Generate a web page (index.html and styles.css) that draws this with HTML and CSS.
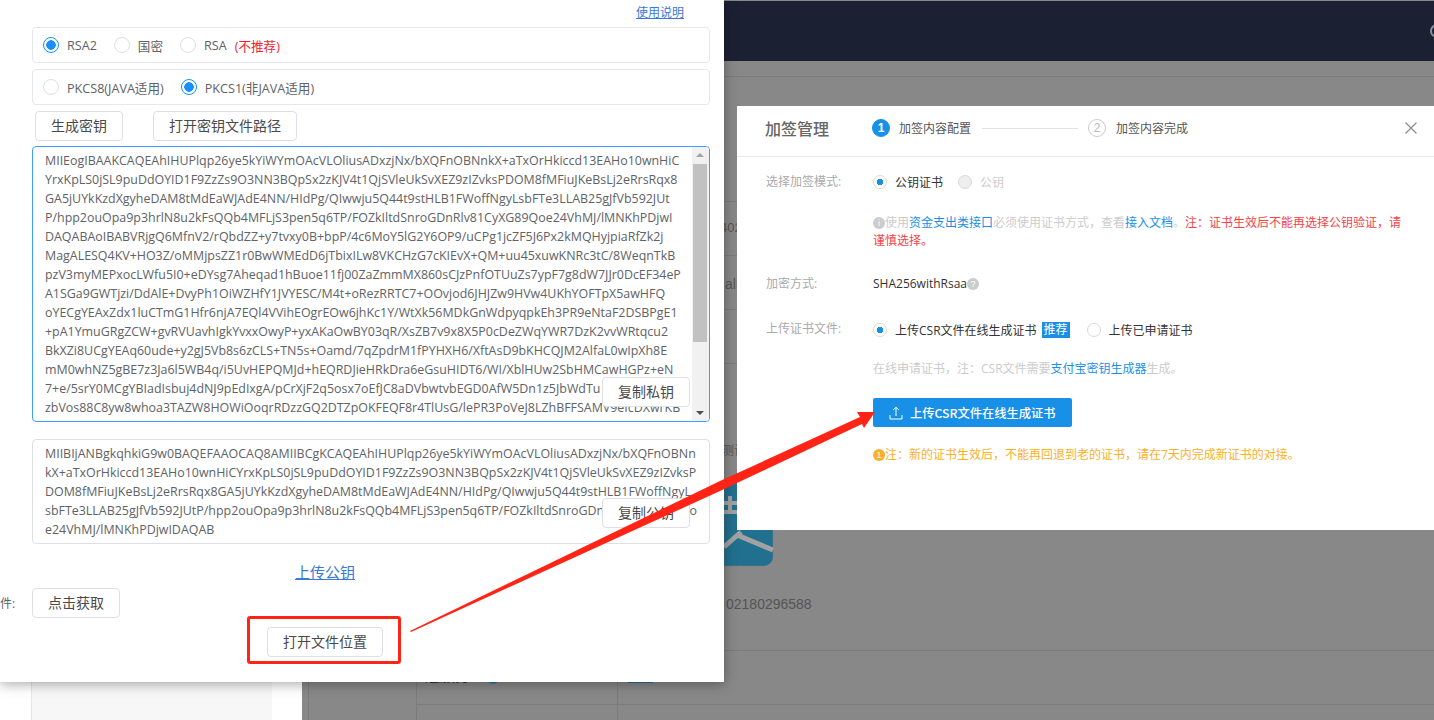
FILE: index.html
```html
<!DOCTYPE html>
<html lang="zh-CN">
<head>
<meta charset="utf-8">
<title>加签管理</title>
<link rel="stylesheet" href="styles.css">
</head>
<body>
<div class="desktop">
  <div class="bg-page">
    <div class="bg-top"></div>
    <div class="hline l76"></div><div class="hline l201"></div><div class="hline l255"></div><div class="hline l309"></div><div class="hline l363"></div><div class="hline l650"></div><div class="hline l704"></div>
    <div class="vline v308"></div><div class="vline v416"></div><div class="vline v617"></div>
    <div class="top-glyph"></div>
    <span class="bg-text t402">402</span>
    <span class="bg-text talip">alip</span>
    <span class="bg-text tce">测试</span>
    <span class="bg-text tnum">02180296588</span>
    <span class="bg-text tsvc">连服务</span>
    <span class="bg-dot"></span>
    <span class="bg-tag"></span>
    <svg class="logo" width="50" height="87" viewBox="0 0 50 87"><path d="M0 3H49V77a9 9 0 0 1-9 9H0Z" fill="#22708f" stroke="#7d7d7d" stroke-width=".5"/><path d="M0 23H13M0 32H13M6 16V32" stroke="#a2a2a2" stroke-width="4" fill="none"/><path d="M0 67L17 52M13 55L49 70" stroke="#a2a2a2" stroke-width="5" fill="none"/></svg>
    <div class="side-left"><div class="side-inner"></div></div>
  </div>

  <section class="panel">
    <div class="help-row"><a class="help-link">使用说明</a></div>
    <div class="opt-box">
      <label class="opt"><i class="rd on"></i>RSA2</label>
      <label class="opt"><i class="rd"></i>国密</label>
      <label class="opt"><i class="rd"></i>RSA<em class="warn">(不推荐)</em></label>
    </div>
    <div class="opt-box">
      <label class="opt"><i class="rd"></i>PKCS8(JAVA适用)</label>
      <label class="opt"><i class="rd on"></i>PKCS1(非JAVA适用)</label>
    </div>
    <div class="btn-row">
      <button class="btn w88">生成密钥</button>
      <button class="btn w144">打开密钥文件路径</button>
    </div>
    <div class="keybox private">
      <div class="lines">
        <div>MIIEogIBAAKCAQEAhIHUPlqp26ye5kYiWYmOAcVLOliusADxzjNx/bXQFnOBNnkX+aTxOrHkiccd13EAHo10wnHiC</div>
        <div>YrxKpLS0jSL9puDdOYID1F9ZzZs9O3NN3BQpSx2zKJV4t1QjSVleUkSvXEZ9zIZvksPDOM8fMFiuJKeBsLj2eRrsRqx8</div>
        <div>GA5jUYkKzdXgyheDAM8tMdEaWJAdE4NN/HIdPg/QIwwju5Q44t9stHLB1FWoffNgyLsbFTe3LLAB25gJfVb592JUt</div>
        <div>P/hpp2ouOpa9p3hrlN8u2kFsQQb4MFLjS3pen5q6TP/FOZkIltdSnroGDnRlv81CyXG89Qoe24VhMJ/lMNKhPDjwI</div>
        <div>DAQABAoIBABVRjgQ6MfnV2/rQbdZZ+y7tvxy0B+bpP/4c6MoY5lG2Y6OP9/uCPg1jcZF5J6Px2kMQHyjpiaRfZk2j</div>
        <div>MagALESQ4KV+HO3Z/oMMjpsZZ1r0BwWMEdD6jTbixILw8VKCHzG7cKIEvX+QM+uu45xuwKNRc3tC/8WeqnTkB</div>
        <div>pzV3myMEPxocLWfu5I0+eDYsg7Aheqad1hBuoe11fj00ZaZmmMX860sCJzPnfOTUuZs7ypF7g8dW7JJr0DcEF34eP</div>
        <div>A1SGa9GWTjzi/DdAlE+DvyPh1OiWZHfY1JVYESC/M4t+oRezRRTC7+OOvjod6JHJZw9HVw4UKhYOFTpX5awHFQ</div>
        <div>oYECgYEAxZdx1luCTmG1Hfr6njA7EQl4VVihEOgrEOw6jhKc1Y/WtXk56MDkGnWdpyqpkEh3PR9eNtaF2DSBPgE1</div>
        <div>+pA1YmuGRgZCW+gvRVUavhIgkYvxxOwyP+yxAKaOwBY03qR/XsZB7v9x8X5P0cDeZWqYWR7DzK2vvWRtqcu2</div>
        <div>BkXZi8UCgYEAq60ude+y2gJ5Vb8s6zCLS+TN5s+Oamd/7qZpdrM1fPYHXH6/XftAsD9bKHCQJM2AlfaL0wIpXh8E</div>
        <div>mM0whNZ5gBE7z3Ja6l5WB4q/i5UvHEPQMJd+hEQRDJieHRkDra6eGsuHIDT6/WI/XblHUw2SbHMCawHGPz+eN</div>
        <div>7+e/5srY0MCgYBIadIsbuj4dNJ9pEdIxgA/pCrXjF2q5osx7oEfJC8aDVbwtvbEGD0AfW5Dn1z5JbWdTu</div>
        <div>zbVos88C8yw8whoa3TAZW8HOWiOoqrRDzzGQ2DTZpOKFEQF8r4TlUsG/lePR3PoVeJ8LZhBFFSAMV9eIcDXwrKB</div>
      </div>
      <div class="scrollbar">
        <span class="arrow-up"></span>
        <span class="thumb"></span>
        <span class="arrow-down"></span>
      </div>
      <button class="btn w88 copy copy-private">复制私钥</button>
    </div>
    <div class="keybox public">
      <div class="lines">
        <div>MIIBIjANBgkqhkiG9w0BAQEFAAOCAQ8AMIIBCgKCAQEAhIHUPlqp26ye5kYiWYmOAcVLOliusADxzjNx/bXQFnOBNn</div>
        <div>kX+aTxOrHkiccd13EAHo10wnHiCYrxKpLS0jSL9puDdOYID1F9ZzZs9O3NN3BQpSx2zKJV4t1QjSVleUkSvXEZ9zIZvksP</div>
        <div>DOM8fMFiuJKeBsLj2eRrsRqx8GA5jUYkKzdXgyheDAM8tMdEaWJAdE4NN/HIdPg/QIwwju5Q44t9stHLB1FWoffNgyL</div>
        <div>sbFTe3LLAB25gJfVb592JUtP/hpp2ouOpa9p3hrlN8u2kFsQQb4MFLjS3pen5q6TP/FOZkIltdSnroGDnRlv81CyXG89Qo</div>
        <div>e24VhMJ/lMNKhPDjwIDAQAB</div>
      </div>
      <button class="btn w88 copy copy-public">复制公钥</button>
    </div>
    <div class="upload-row"><a class="upload-link">上传公钥</a></div>
    <div class="fetch-row">
      <span class="cut-label">件:</span>
      <button class="btn w88">点击获取</button>
    </div>
    <div class="open-row"><button class="btn w116">打开文件位置</button></div>
  </section>

  <section class="dialog">
    <header class="dlg-head">
      <h2 class="dlg-title">加签管理</h2>
      <div class="steps">
        <span class="step-num active">1</span><span class="step-text">加签内容配置</span>
        <span class="step-line"></span>
        <span class="step-num">2</span><span class="step-text">加签内容完成</span>
      </div>
      <svg class="dlg-close" width="12" height="12" viewBox="0 0 12 12"><path d="M.5.5l11 11M11.500.5l-11 11" stroke="#8a8a8a" stroke-width="1.2" fill="none"/></svg>
    </header>
    <div class="dlg-body">
      <div class="row r-mode">
        <span class="lbl">选择加签模式:</span>
        <div class="val radios">
          <label class="d-opt"><i class="drd on"></i>公钥证书</label>
          <label class="d-opt off"><i class="drd dis"></i>公钥</label>
        </div>
      </div>
      <div class="row r-note1">
        <span class="lbl"></span>
        <p class="val note"><i class="ico gray">i</i>使用<a class="lnk">资金支出类接口</a>必须使用证书方式，查看<a class="lnk">接入文档</a>。<span class="red">注：证书生效后不能再选择公钥验证，请谨慎选择。</span></p>
      </div>
      <div class="row r-enc">
        <span class="lbl">加密方式:</span>
        <div class="val">SHA256withRsaa<i class="ico gray q">?</i></div>
      </div>
      <div class="row r-up">
        <span class="lbl">上传证书文件:</span>
        <div class="val radios">
          <label class="d-opt"><i class="drd on"></i>上传CSR文件在线生成证书<b class="tag">推荐</b></label>
          <label class="d-opt second"><i class="drd"></i>上传已申请证书</label>
        </div>
      </div>
      <div class="row r-note2">
        <span class="lbl"></span>
        <p class="val note">在线申请证书，注：CSR文件需要<a class="lnk">支付宝密钥生成器</a>生成。</p>
      </div>
      <div class="row r-btn">
        <span class="lbl"></span>
        <button class="primary">
          <svg width="14" height="14" viewBox="0 0 14 14"><path d="M7 10V1.500M4.200 4L7 1.200 9.800 4M1 9v4h12V9" stroke="#fff" stroke-width="1" fill="none"/></svg>
          上传CSR文件在线生成证书
        </button>
      </div>
      <div class="row r-warn">
        <span class="lbl"></span>
        <p class="val warnline"><i class="ico amber">1</i>注：新的证书生效后，不能再回退到老的证书，请在7天内完成新证书的对接。</p>
      </div>
    </div>
  </section>

  <div class="red-rect"></div>
  <svg class="red-arrow" width="1434" height="720" viewBox="0 0 1434 720">
    <path d="M410 631L720 481 860 417 857 412 875 412 864 428 862 424 720 491 411 632Z" fill="#ff2415"/>
  </svg>
</div>
</body>
</html>
```

FILE: styles.css
```css
* { box-sizing: border-box; }
html, body { margin: 0; padding: 0; height: 720px; overflow: hidden; }
body { font-family: "Open Sans", "Noto Sans CJK SC", sans-serif; background: #888; color: #555; }
.desktop { position: relative; width: 1434px; height: 720px; overflow: hidden; background: #888; }

.bg-page { position: absolute; inset: 0; }
.bg-top { position: absolute; left: 724px; top: 1px; right: 0; height: 60px; background: #1c2033; }
.top-glyph { position: absolute; left: 1430px; top: 25px; width: 10px; height: 12px; border: 2px solid #8d9099; border-radius: 50%; }
.hline { position: absolute; left: 302px; right: 0; height: 1px; background: #7b7b7b; }
.l76 { top: 76px; } .l201 { top: 201px; } .l255 { top: 255px; } .l309 { top: 309px; } .l363 { top: 363px; }
.l650 { top: 650px; } .l704 { top: 704px; left: 416px; }
.vline { position: absolute; top: 682px; bottom: 0; width: 1px; background: #7b7b7b; }
.v308 { left: 308px; } .v416 { left: 416px; } .v617 { left: 617px; }
.bg-text { position: absolute; font-family: "Liberation Sans", "Noto Sans CJK SC", sans-serif; font-size: 14px; line-height: 16px; color: #555; white-space: nowrap; }
.t402 { left: 720px; top: 220px; font-size: 13px; }
.talip { left: 725px; top: 276px; }
.tce { left: 722px; top: 443px; font-size: 12px; }
.tnum { left: 726px; top: 596px; }
.tsvc { left: 425px; top: 668px; color: #333; font-size: 15px; }
.bg-dot { position: absolute; left: 487px; top: 672px; width: 12px; height: 12px; border-radius: 50%; background: #2a7b9d; }
.bg-tag { position: absolute; left: 628px; top: 676px; width: 25px; height: 7px; background: #2a6a9d; }
.logo { position: absolute; left: 724px; top: 480px; }
.side-left { position: absolute; left: 0; top: 682px; width: 302px; height: 38px; background: #fff; padding-right: 30px; }
.side-inner { margin-left: 31px; height: 38px; background: #f7f7f7; border-left: 1px solid #e6e6e6; }

.panel { position: absolute; left: 0; top: 0; width: 724px; height: 682px; background: #fff; padding: 0 14px 0 32px; box-shadow: 0 2px 12px rgba(0,0,0,.35); }
.help-row { height: 27px; display: flex; justify-content: flex-end; align-items: center; padding: 0 26px 3px 0; }
.help-link { font-size: 12px; color: #3b78d8; text-decoration: underline; }
.opt-box { height: 36px; margin-bottom: 6px; border: 1px solid #e4e7ed; border-radius: 4px; display: flex; align-items: center; padding-left: 10px; gap: 17px; }
.opt { display: flex; align-items: center; font-size: 12.600px; color: #606266; white-space: nowrap; }
.rd { width: 16px; height: 16px; margin-right: 8px; border-radius: 50%; border: 1px solid #dcdfe6; background: #fff; display: block; }
.rd.on { border-color: #1890ff; background: radial-gradient(circle, #1890ff 0 4.500px, #fff 5px); }
.warn { font-style: normal; color: #f5222d; margin-left: 8px; }
.btn-row { display: flex; gap: 30px; padding-left: 3px; height: 35px; }
.btn { height: 30px; border: 1px solid #dcdfe6; border-radius: 4px; background: #fff; color: #4a4a4a; font: 14px/28px "Open Sans", "Noto Sans CJK SC", sans-serif; padding: 0; white-space: nowrap; }
.w88 { width: 88px; } .w144 { width: 144px; } .w116 { width: 116px; }
.keybox { position: relative; border-radius: 4px; overflow: hidden; }
.private { height: 276px; border: 1px solid #409eff; }
.public { height: 105px; margin-top: 17px; border: 1px solid #dcdfe6; }
.lines { padding: 4px 0 0 12px; font-size: 12.430px; line-height: 19px; color: #606266; white-space: nowrap; }
.scrollbar { position: absolute; right: 0; top: 0; bottom: 0; width: 17px; background: #f1f1f1; }
.thumb { position: absolute; left: 1px; right: 2px; top: 17px; height: 178px; background: #c1c1c1; }
.arrow-up, .arrow-down { position: absolute; left: 4px; width: 0; height: 0; border-left: 4px solid transparent; border-right: 4px solid transparent; }
.arrow-up { top: 6px; border-bottom: 4px solid #a3a3a3; }
.arrow-down { bottom: 6px; border-top: 4px solid #505050; }
.copy { position: absolute; left: 569px; }
.copy-private { top: 230px; }
.copy-public { top: 58px; }
.upload-row { display: flex; justify-content: center; padding: 17px 92px 0 0; height: 44px; }
.upload-link { font-size: 15px; line-height: 22px; color: #3b78d8; text-decoration: underline; }
.fetch-row { position: relative; height: 39px; }
.cut-label { position: absolute; left: -32px; top: 6px; font-size: 12px; color: #606266; }
.open-row { padding-left: 235px; }

.dialog { position: absolute; left: 737px; top: 106px; width: 697px; height: 424px; background: #fff; }
.dlg-head { height: 51px; display: flex; align-items: center; border-bottom: 1px solid #e8e8e8; padding: 0 17px 6px 28px; }
.dlg-title { margin: 0; width: 107px; font-size: 16px; font-weight: 500; color: #666; font-family: "Noto Sans CJK SC", sans-serif; }
.steps { flex: 1; display: flex; align-items: center; font-size: 12px; color: #555; }
.step-num { width: 18px; height: 18px; border-radius: 50%; border: 1px solid #ccc; color: #bbb; font: 12px/16px "Liberation Sans", sans-serif; text-align: center; margin-right: 10px; }
.step-num.active { background: #1890e8; border-color: #1890e8; color: #fff; font-weight: 700; margin-right: 9px; }
.step-line { width: 96px; height: 1px; background: #e3e3e3; margin: 0 10px 0 11px; }
.dlg-body { padding: 0 28px 0 29px; }
.row { display: flex; font-size: 12px; line-height: 17px; color: #333; }
.lbl { width: 107px; flex: none; color: #aaa; }
.val { margin: 0; flex: 1; }
.r-mode { margin-top: 16px; height: 33px; }
.r-mode .radios { padding-top: 1px; }
.r-note1 { margin-top: 8px; height: 61px; }
.r-enc { height: 45px; }
.r-up { height: 40px; }
.r-up .radios { padding-top: 3px; }
.r-note2 { height: 38px; }
.r-btn { height: 48px; }
.r-warn { height: 20px; }
.radios { display: flex; align-items: center; height: 17px; }
.d-opt { display: flex; align-items: center; white-space: nowrap; }
.d-opt.off { color: #ccc; margin-left: 15px; }
.d-opt.second { margin-left: 17px; }
.drd { width: 14px; height: 14px; margin-right: 8px; border-radius: 50%; border: 1px solid #d9d9d9; background: #fff; display: block; }
.drd.on { background: radial-gradient(circle, #1890e8 0 3px, #fff 3.500px); }
.drd.dis { background: #eee; }
.tag { margin-left: 5px; padding: 0 2px; background: #1890e8; color: #fff; font-weight: 400; line-height: 16px; }
.note { color: #ccc; line-height: 18px; }
.lnk { color: #1890e8; }
.red { color: #f5424a; }
.ico { display: inline-block; width: 12px; height: 12px; border-radius: 50%; vertical-align: 1px; font: 9px/12px "Liberation Sans", sans-serif; text-align: center; color: #fff; }
.gray { background: #ccc; }
.amber { background: #fbb02a; }
.primary { width: 199px; height: 29px; margin-top: 0; display: flex; align-items: center; gap: 7px; padding: 0 0 0 16px; border: 0; border-radius: 2px; background: #1890e8; color: #fff; font: 500 12.250px "Noto Sans CJK SC", sans-serif; }
.warnline { color: #fbb02a; }

.red-rect { position: absolute; left: 247px; top: 616px; width: 154px; height: 48px; border: 3px solid #ff2415; border-radius: 3px; }
.red-arrow { position: absolute; left: 0; top: 0; pointer-events: none; }
```
